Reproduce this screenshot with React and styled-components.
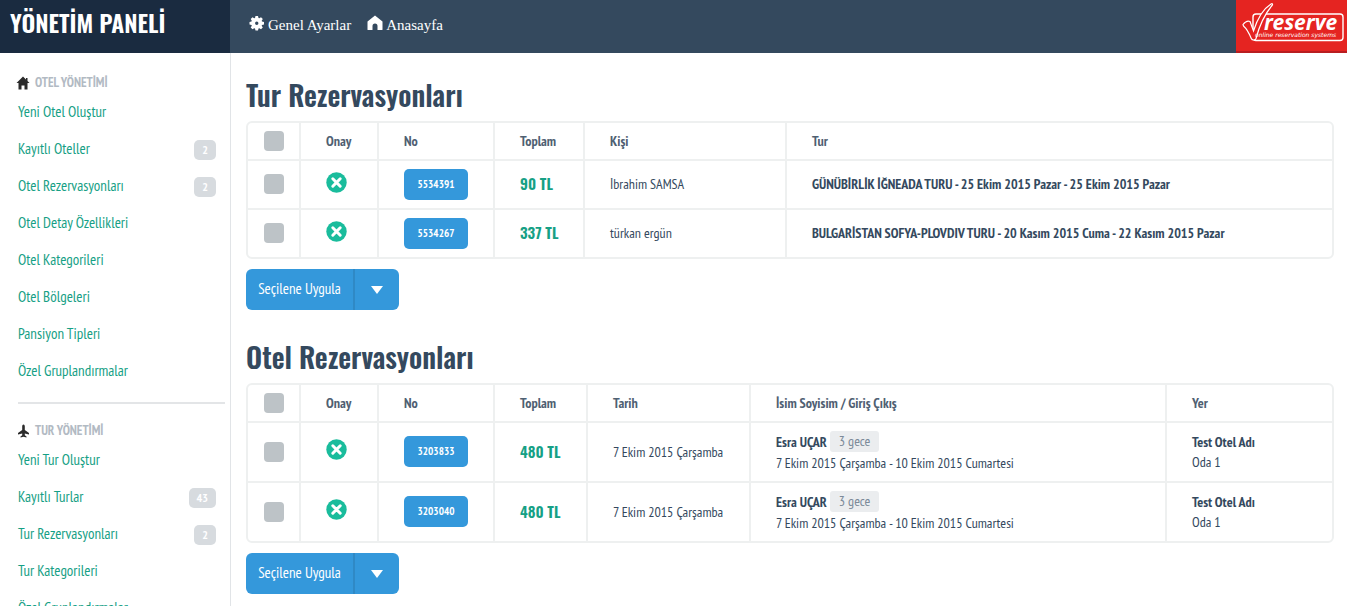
import React from "react";
import styled, { createGlobalStyle } from "styled-components";

const narrow = `"PT Sans Narrow", "Liberation Sans Narrow", "Open Sans Condensed", "Roboto Condensed", "DejaVu Sans Condensed", sans-serif`;
const display = `"Oswald", "Liberation Sans Narrow", "Open Sans Condensed", "Roboto Condensed", "DejaVu Sans Condensed", sans-serif`;
const serif = `"Liberation Serif", serif`;

const GlobalStyle = createGlobalStyle`
  * {
    box-sizing: border-box;
  }
  body {
    margin: 0;
    background: #fff;
    color: #34495e;
    font-family: ${narrow};
    font-size: 14px;
    line-height: 20px;
  }
  button {
    font-family: inherit;
    border: 0;
    cursor: pointer;
  }
`;

const Page = styled.div`
  height: 100vh;
  display: flex;
  flex-direction: column;
  overflow: hidden;
`;

const TopBar = styled.header`
  flex: 0 0 53px;
  display: flex;
  background: #34495e;
`;

const Brand = styled.a`
  width: 230px;
  height: 53px;
  padding: 2px 10px 0;
  background: #1a2b40;
  color: #fff;
  font-family: ${display};
  font-size: 24px;
  font-weight: 600;
  line-height: 40px;
  text-decoration: none;
  white-space: nowrap;
`;

const TopNav = styled.nav`
  flex: 1;
  display: flex;
  gap: 16px;
  padding: 15px 19px 0;
`;

const TopLink = styled.a`
  display: flex;
  gap: 3px;
  height: 20px;
  color: #fff;
  font-family: ${serif};
  font-size: 15px;
  text-decoration: none;

  svg {
    width: 16px;
    height: 16px;
  }
`;

const LogoLink = styled.a`
  display: block;
  width: 112px;
  height: 53px;

  svg {
    display: block;
  }
`;

const Body = styled.div`
  flex: 1;
  display: flex;
  min-height: 0;
`;

const Sidebar = styled.aside`
  flex: 0 0 231px;
  padding: 17px 5px 0 18px;
  border-right: 1px solid #e1e4e7;
  overflow: hidden;
`;

const MenuTitle = styled.h2`
  display: flex;
  align-items: center;
  gap: 5px;
  height: 23px;
  margin: 0;
  padding-top: 2px;
  color: #b2bac3;
  font-size: 13px;
  font-weight: bold;

  svg {
    width: 12px;
    height: 14px;
    color: #2b2b2b;
    overflow: visible;
  }
`;

const Menu = styled.ul`
  margin: 0;
  padding: 0 9px 0 0;
  list-style: none;
`;

const MenuItem = styled.li`
  display: flex;
  align-items: center;
  justify-content: space-between;
  height: 37px;
`;

const MenuLink = styled.a`
  color: #16a085;
  font-size: 15px;
  text-decoration: none;
`;

const Count = styled.span`
  margin-top: 2px;
  padding: 0 8px;
  border-radius: 5px;
  background: #d7dbdf;
  color: #fff;
  font-size: 12px;
  font-weight: bold;
`;

const Divider = styled.hr`
  height: 2px;
  margin: 13px 0 14px;
  border: 0;
  background: #e3e5e7;
`;

const Main = styled.main`
  flex: 1;
  min-width: 0;
  padding: 22px 13px 0 15px;
`;

const Section = styled.section`
  margin-bottom: 27px;
`;

const Title = styled.h1`
  margin: 0 0 6px;
  font-family: ${display};
  font-size: 28px;
  font-weight: 600;
  line-height: 40px;
`;

const Table = styled.table`
  width: 100%;
  table-layout: fixed;
  border: 2px solid #eef0f0;
  border-radius: 6px;
  border-collapse: separate;
  border-spacing: 0;
`;

const Col = styled.col`
  width: ${(props) => props.$width};
`;

const cell = `
  padding: 0 0 0 25px;
  border-left: 2px solid #eef0f0;
  text-align: left;
  vertical-align: middle;
  font-size: 14px;

  &:first-child {
    padding-left: 16px;
    border-left: 0;
  }
`;

const Th = styled.th`
  ${cell}
  height: 36px;
  color: #4f6072;
`;

const Td = styled.td`
  ${cell}
  height: ${(props) => (props.$tall ? "60px" : "49px")};
  padding-bottom: 1px;
  border-top: 2px solid #eef0f0;
`;

const Check = styled.input.attrs({ type: "checkbox" })`
  appearance: none;
  display: block;
  width: 20px;
  height: 20px;
  margin: 0;
  border-radius: 4px;
  background: #bdc3c7;

  &:checked {
    background: #1abc9c;
  }
`;

const StatusButton = styled.button`
  display: block;
  padding: 0 0 4px;
  background: none;

  svg {
    display: block;
  }
`;

const NumberLink = styled.a`
  display: block;
  width: 64px;
  border-radius: 5px;
  background: #3498db;
  color: #fff;
  font-size: 11px;
  font-weight: bold;
  line-height: 31px;
  text-align: center;
  text-decoration: none;
`;

const Amount = styled.strong`
  color: #16a085;
  font-family: ${display};
  font-size: 15px;
  font-weight: 600;
`;

const GuestLine = styled.div`
  display: flex;
  align-items: center;
  gap: 3px;
  height: 22px;
`;

const Nights = styled.span`
  padding: 0 9px;
  border-radius: 3px;
  background: #ebedef;
  color: #7b8a99;
  font-size: 14px;
  line-height: 21px;
`;

const SplitButton = styled.div`
  display: inline-flex;
  height: 41px;
  margin-top: 10px;
  border-radius: 6px;
  overflow: hidden;
  vertical-align: top;
`;

const ApplyButton = styled.button`
  width: 107px;
  padding: 0 0 2px;
  background: #3498db;
  color: #fff;
  font-size: 15px;
`;

const CaretButton = styled.button`
  display: flex;
  align-items: center;
  justify-content: center;
  width: 46px;
  padding: 0;
  border-left: 2px solid #2f89c5;
  background: #3498db;
`;

const GearIcon = () => (
  <svg viewBox="0 0 16 16" fill="currentColor" aria-hidden="true">
    <path
      fillRule="evenodd"
      d="M6.500 1h2.500l.5 2 .8.3L12 2.200 13.800 4l-1.100 1.700.3.800 2 .5v2.500l-2 .5-.3.800 1.100 1.700-1.800 1.800-1.700-1.100-.8.3-.5 2H6.500l-.5-2-.8-.3-1.700 1.100-1.800-1.800 1.100-1.700-.3-.8-2-.5V7l2-.5.3-.8L1.700 4l1.800-1.800 1.700 1.100.8-.3zM7.750 6.500a1.700 1.700 0 1 0 0 3.400 1.700 1.700 0 0 0 0-3.400z"
    />
  </svg>
);

const HouseIcon = () => (
  <svg viewBox="0 0 16 16" fill="currentColor" aria-hidden="true">
    <path d="M8 0.500L0.500 6.500v8q0 .5.5.500h4.500v-4a2.500 2.500 0 0 1 5 0v4H15q.5 0 .5-.5V6.500z" />
  </svg>
);

const HomeIcon = () => (
  <svg viewBox="0 0 12 14" fill="currentColor" aria-hidden="true">
    <path d="M5 0.500L-1.500 7H0.500v6.500h3v-4h3v4h3V7h2L9.500 5V2H8v1.500z" />
  </svg>
);

const PlaneIcon = () => (
  <svg viewBox="0 0 12 14" fill="currentColor" aria-hidden="true">
    <path d="M5.500 0.500C4.500 0.500 4.200 1.500 4.200 2.500v3.500L0 9v1.500l4.200-1v1.800L2.500 12.500v1l3-.7 3 .7v-1l-1.700-1.200V9.500l4.200 1V9L6.800 6V2.500c0-1-.3-2-1.300-2z" />
  </svg>
);

const CrossIcon = () => (
  <svg width="21" height="21" viewBox="0 0 21 21" aria-hidden="true">
    <circle cx="10.500" cy="10.500" r="10.200" fill="#1abc9c" />
    <path d="M6.800 6.800l7.400 7.400M14.200 6.800l-7.400 7.400" stroke="#fff" strokeWidth="3" strokeLinecap="round" />
  </svg>
);

const CaretIcon = () => (
  <svg width="12" height="8" viewBox="0 0 12 8" fill="#fff" aria-hidden="true">
    <path d="M0 0h12L6 8z" />
  </svg>
);

const ReserveLogo = () => (
  <svg width="112" height="53" viewBox="0 0 112 53" role="img" aria-label="reserve">
    <rect x="1" width="111" height="53" fill="#e52421" />
    <rect x="1" y="51" width="111" height="2" fill="#b91d20" />
    <rect x="18" y="14" width="90" height="26.500" rx="3" fill="none" stroke="#fff" strokeWidth="1.400" />
    <path
      d="M8 24.500C10 22 13 20.500 15 21.500L18.500 31C22 20 28 9 36 4c1.500-.8 2 .3 1 1.500C30 14 24 27 21 38.500c-.6 2-4 2-4.700 0C14 33 12 29 8.500 26z"
      fill="#e52421"
      stroke="#fff"
      strokeWidth="1.200"
    />
    <text x="29" y="30" fill="#fff" fontFamily="Noto Sans" fontSize="21" fontWeight="bold" fontStyle="italic">
      reserve
    </text>
    <text x="20" y="37" fill="#fff" fontFamily="DejaVu Sans" fontSize="6" fontStyle="italic">
      online reservation systems
    </text>
  </svg>
);

const hotelMenu = [
  { label: "Yeni Otel Oluştur" },
  { label: "Kayıtlı Oteller", count: 2 },
  { label: "Otel Rezervasyonları", count: 2 },
  { label: "Otel Detay Özellikleri" },
  { label: "Otel Kategorileri" },
  { label: "Otel Bölgeleri" },
  { label: "Pansiyon Tipleri" },
  { label: "Özel Gruplandırmalar" },
];

const tourMenu = [
  { label: "Yeni Tur Oluştur" },
  { label: "Kayıtlı Turlar", count: 43 },
  { label: "Tur Rezervasyonları", count: 2 },
  { label: "Tur Kategorileri" },
  { label: "Özel Gruplandırmalar" },
];

const tours = [
  {
    no: "5534391",
    total: "90 TL",
    person: "İbrahim SAMSA",
    tour: "GÜNÜBİRLİK İĞNEADA TURU - 25 Ekim 2015 Pazar - 25 Ekim 2015 Pazar",
  },
  {
    no: "5534267",
    total: "337 TL",
    person: "türkan ergün",
    tour: "BULGARİSTAN SOFYA-PLOVDIV TURU - 20 Kasım 2015 Cuma - 22 Kasım 2015 Pazar",
  },
];

const hotels = ["3203833", "3203040"].map((no) => ({
  no,
  total: "480 TL",
  date: "7 Ekim 2015 Çarşamba",
  guest: "Esra UÇAR",
  nights: "3 gece",
  stay: "7 Ekim 2015 Çarşamba - 10 Ekim 2015 Cumartesi",
  hotel: "Test Otel Adı",
  room: "Oda 1",
}));

const SideMenu = ({ icon, title, items }) => (
  <nav aria-label={title}>
    <MenuTitle>
      {icon} {title}
    </MenuTitle>
    <Menu>
      {items.map((item) => (
        <MenuItem key={item.label}>
          <MenuLink href="#">{item.label}</MenuLink>
          {item.count && <Count>{item.count}</Count>}
        </MenuItem>
      ))}
    </Menu>
  </nav>
);

// Table with the select, approval, number and total columns both lists share
const ReservationTable = ({ widths, heads, rows, tall, renderCells }) => (
  <Table>
    <colgroup>
      {widths.map((width, i) => (
        <Col key={i} $width={width} />
      ))}
    </colgroup>
    <thead>
      <tr>
        <Th>
          <Check aria-label="Tümünü seç" />
        </Th>
        {["Onay", "No", "Toplam", ...heads].map((head) => (
          <Th key={head}>{head}</Th>
        ))}
      </tr>
    </thead>
    <tbody>
      {rows.map((row) => (
        <tr key={row.no}>
          <Td $tall={tall}>
            <Check aria-label={row.no} />
          </Td>
          <Td>
            <StatusButton aria-label="Onay">
              <CrossIcon />
            </StatusButton>
          </Td>
          <Td>
            <NumberLink href="#">{row.no}</NumberLink>
          </Td>
          <Td>
            <Amount>{row.total}</Amount>
          </Td>
          {renderCells(row)}
        </tr>
      ))}
    </tbody>
  </Table>
);

const ApplyToSelected = () => (
  <SplitButton>
    <ApplyButton>Seçilene Uygula</ApplyButton>
    <CaretButton aria-label="Seçenekler">
      <CaretIcon />
    </CaretButton>
  </SplitButton>
);

export default function App() {
  return (
    <Page>
      <GlobalStyle />
      <TopBar>
        <Brand href="#">YÖNETİM PANELİ</Brand>
        <TopNav>
          <TopLink href="#">
            <GearIcon /> Genel Ayarlar
          </TopLink>
          <TopLink href="#">
            <HouseIcon /> Anasayfa
          </TopLink>
        </TopNav>
        <LogoLink href="#">
          <ReserveLogo />
        </LogoLink>
      </TopBar>
      <Body>
        <Sidebar>
          <SideMenu icon={<HomeIcon />} title="OTEL YÖNETİMİ" items={hotelMenu} />
          <Divider />
          <SideMenu icon={<PlaneIcon />} title="TUR YÖNETİMİ" items={tourMenu} />
        </Sidebar>
        <Main>
          <Section>
            <Title>Tur Rezervasyonları</Title>
            <ReservationTable
              widths={["51px", "78px", "116px", "90px", "202px", "auto"]}
              heads={["Kişi", "Tur"]}
              rows={tours}
              renderCells={(row) => (
                <>
                  <Td>{row.person}</Td>
                  <Td>
                    <strong>{row.tour}</strong>
                  </Td>
                </>
              )}
            />
            <ApplyToSelected />
          </Section>
          <Section>
            <Title>Otel Rezervasyonları</Title>
            <ReservationTable
              widths={["51px", "78px", "116px", "93px", "163px", "416px", "auto"]}
              heads={["Tarih", "İsim Soyisim / Giriş Çıkış", "Yer"]}
              rows={hotels}
              tall
              renderCells={(row) => (
                <>
                  <Td>{row.date}</Td>
                  <Td>
                    <GuestLine>
                      <strong>{row.guest}</strong>
                      <Nights>{row.nights}</Nights>
                    </GuestLine>
                    {row.stay}
                  </Td>
                  <Td>
                    <strong>{row.hotel}</strong>
                    <br />
                    {row.room}
                  </Td>
                </>
              )}
            />
            <ApplyToSelected />
          </Section>
        </Main>
      </Body>
    </Page>
  );
}
